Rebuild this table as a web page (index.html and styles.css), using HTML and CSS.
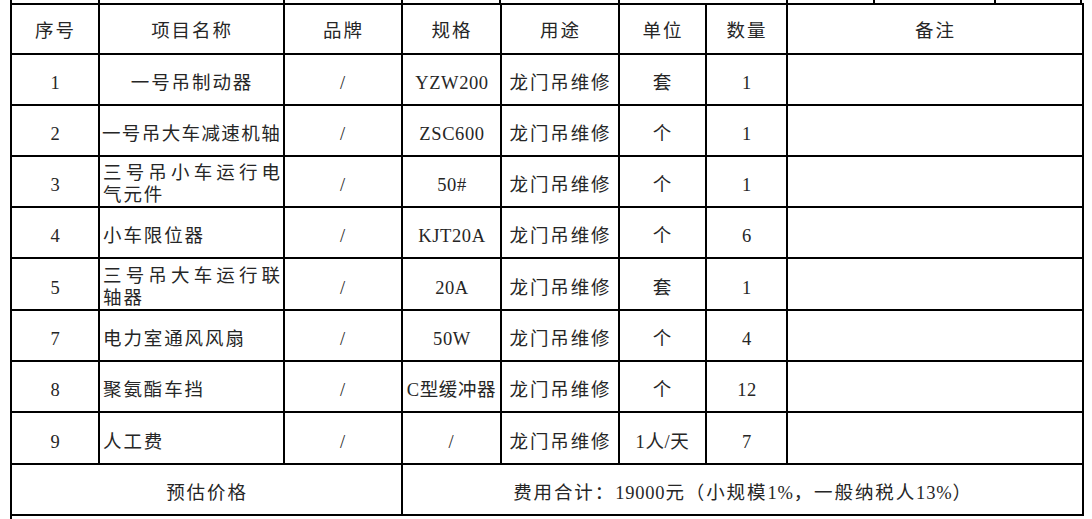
FILE: index.html
```html
<!DOCTYPE html>
<html lang="zh">
<head>
<meta charset="utf-8">
<title>维修项目表</title>
<link rel="stylesheet" href="styles.css">
</head>
<body>
<div class="page">
  <div class="prev-row">
    <span class="seg w88"></span><span class="seg w185"></span><span class="seg w118"></span><span class="seg w98"></span><span class="seg w119"></span><span class="seg w168"></span><span class="seg w87"></span><span class="seg w121"></span><span class="seg w88 last"></span>
  </div>
  <table class="sheet">
    <colgroup>
      <col class="c-no"><col class="c-name"><col class="c-brand"><col class="c-spec"><col class="c-use"><col class="c-unit"><col class="c-qty"><col class="c-note">
    </colgroup>
    <thead>
      <tr class="head">
        <th>序号</th><th>项目名称</th><th>品牌</th><th>规格</th><th>用途</th><th>单位</th><th>数量</th><th>备注</th>
      </tr>
    </thead>
    <tbody>
      <tr class="r51">
        <td class="num">1</td><td>一号吊制动器</td><td>/</td><td class="lat">YZW200</td><td>龙门吊维修</td><td>套</td><td class="num">1</td><td></td>
      </tr>
      <tr class="r51">
        <td class="num">2</td><td class="tight">一号吊大车减速机轴</td><td>/</td><td class="lat">ZSC600</td><td>龙门吊维修</td><td>个</td><td class="num">1</td><td></td>
      </tr>
      <tr class="r51">
        <td class="num">3</td><td class="left just">三号吊小车运行电气元件</td><td>/</td><td class="lat">50#</td><td>龙门吊维修</td><td>个</td><td class="num">1</td><td></td>
      </tr>
      <tr class="r51">
        <td class="num">4</td><td class="left">小车限位器</td><td>/</td><td class="lat">KJT20A</td><td>龙门吊维修</td><td>个</td><td class="num">6</td><td></td>
      </tr>
      <tr class="r52">
        <td class="num">5</td><td class="left just">三号吊大车运行联轴器</td><td>/</td><td class="lat">20A</td><td>龙门吊维修</td><td>套</td><td class="num">1</td><td></td>
      </tr>
      <tr class="r51">
        <td class="num">7</td><td class="left">电力室通风风扇</td><td>/</td><td class="lat">50W</td><td>龙门吊维修</td><td>个</td><td class="num">4</td><td></td>
      </tr>
      <tr class="r51">
        <td class="num">8</td><td class="left">聚氨酯车挡</td><td>/</td><td class="mix">C型缓冲器</td><td>龙门吊维修</td><td>个</td><td class="num">12</td><td></td>
      </tr>
      <tr class="r52">
        <td class="num">9</td><td class="left">人工费</td><td>/</td><td>/</td><td>龙门吊维修</td><td class="mix">1人/天</td><td class="num">7</td><td></td>
      </tr>
      <tr class="r51 total">
        <td colspan="3">预估价格</td>
        <td colspan="5">费用合计：<span class="digits">19000</span>元（小规模<span class="digits">1%</span>，一般纳税人<span class="digits">13%</span>）</td>
      </tr>
    </tbody>
  </table>
  <div class="next-row"></div>
</div>
</body>
</html>
```

FILE: styles.css
```css
html, body {
  margin: 0;
  padding: 0;
  background: #ffffff;
}

body {
  font-family: "Liberation Serif", "Noto Sans CJK SC", serif;
  font-size: 18.5px;
  color: #262626;
}

.page {
  padding-left: 10px;
  width: 1074px;
}

.prev-row {
  display: flex;
  height: 3px;
}

.seg {
  box-sizing: border-box;
  height: 3px;
  border-left: 2px solid #000;
}

.seg.last { border-right: 2px solid #000; }
.w88 { width: 88px; }
.w185 { width: 185px; }
.w118 { width: 118px; }
.w98 { width: 98px; }
.w119 { width: 119px; }
.w168 { width: 168px; }
.w87 { width: 87px; }
.w121 { width: 121px; }

.sheet {
  border-collapse: collapse;
  table-layout: fixed;
  width: 1074px;
  border: 2px solid #000;
}

.c-no { width: 88px; }
.c-name { width: 185px; }
.c-brand { width: 118px; }
.c-spec { width: 99px; }
.c-use { width: 118px; }
.c-unit { width: 87px; }
.c-qty { width: 81px; }
.c-note { width: 296px; }

.sheet th,
.sheet td {
  border: 2px solid #000;
  text-align: center;
  vertical-align: middle;
  font-weight: normal;
  letter-spacing: 1.9px;
  line-height: 22px;
  padding: 7px 2px 0 3px;
  white-space: normal;
  overflow: visible;
  box-sizing: border-box;
}

.sheet th {
  height: 50px;
  padding-top: 3px;
}

.r51 td { height: 51px; }
.r52 td { height: 52px; }

.sheet td.left {
  text-align: left;
}

.sheet td.just {
  text-align: justify;
  text-align-last: left;
  padding-right: 1px;
  padding-top: 5px;
}

.sheet td.tight {
  padding-left: 0;
  padding-right: 0;
  letter-spacing: 1.4px;
  white-space: nowrap;
}

.sheet td.num,
.sheet td.lat {
  letter-spacing: 0.6px;
}

.sheet td.mix {
  letter-spacing: 0.6px;
  padding-left: 1px;
  padding-right: 1px;
}

.digits {
  letter-spacing: 0.8px;
}

.next-row {
  height: 4px;
  border-left: 2px solid #000;
  width: 0;
}
```
